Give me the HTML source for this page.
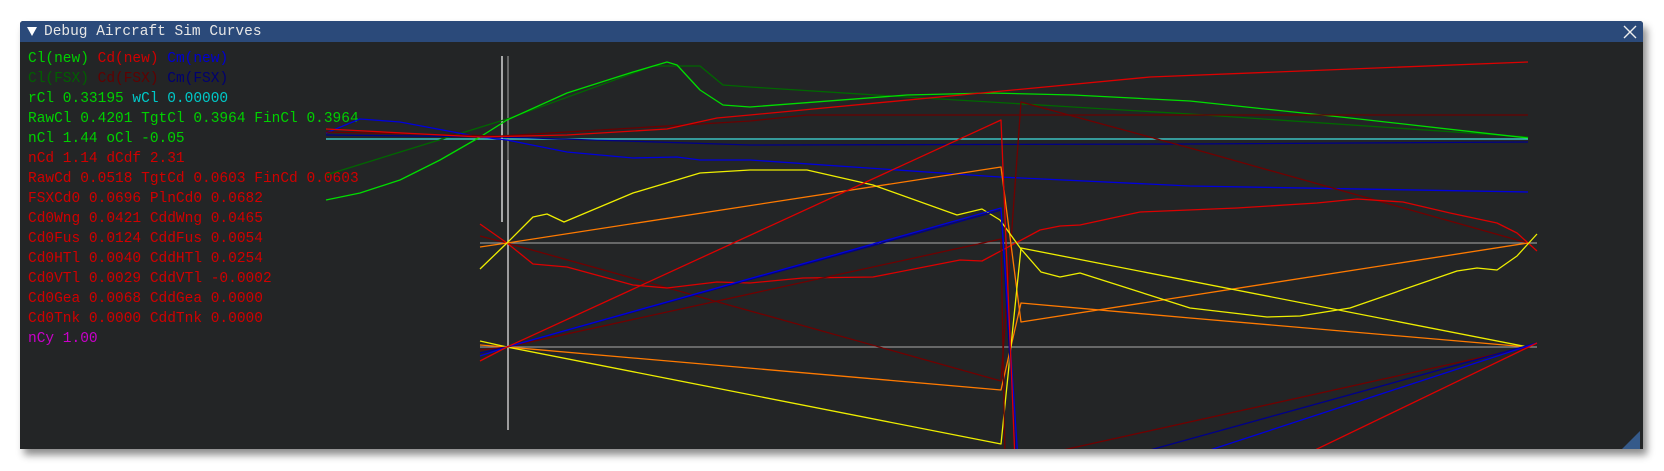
<!DOCTYPE html>
<html><head><meta charset="utf-8"><style>
html,body{margin:0;padding:0;background:#fff;width:1664px;height:471px;overflow:hidden}
.win{position:absolute;left:20px;top:21px;width:1623px;height:428px;background:#232526;box-shadow:4px 6px 8px rgba(0,0,0,0.45);border-radius:3px 3px 0 0;overflow:hidden}
.tb{position:absolute;left:0;top:0;width:100%;height:21px;background:#2b4a7a}
.tt{position:absolute;left:24px;top:1px;font:14.5px "Liberation Mono",monospace;color:#e6e6e6;line-height:20px}
.tri{position:absolute;left:7px;top:6px;width:0;height:0;border-left:5px solid transparent;border-right:5px solid transparent;border-top:9px solid #fff}
.txt{position:absolute;left:8px;top:28px;font:14.5px "Liberation Mono",monospace;line-height:20px;white-space:pre}
svg{position:absolute;left:0;top:0}
</style></head><body>
<div class="win">
<div class="tb"><div class="tri"></div><div class="tt">Debug Aircraft Sim Curves</div>
<svg width="1623" height="21"><path d="M1604 5 L1616 17 M1616 5 L1604 17" stroke="#eee" stroke-width="1.4"/></svg></div>
<div class="txt"><span style="color:#00d000">Cl(new)</span> <span style="color:#d00000">Cd(new)</span> <span style="color:#0000d0">Cm(new)</span>
<span style="color:#006000">Cl(FSX)</span> <span style="color:#600000">Cd(FSX)</span> <span style="color:#000070">Cm(FSX)</span>
<span style="color:#00d000">rCl 0.33195</span> <span style="color:#00c8c8">wCl 0.00000</span>
<span style="color:#00d000">RawCl 0.4201 TgtCl 0.3964 FinCl 0.3964
nCl 1.44 oCl -0.05</span>
<span style="color:#d00000">nCd 1.14 dCdf 2.31
RawCd 0.0518 TgtCd 0.0603 FinCd 0.0603
FSXCd0 0.0696 PlnCd0 0.0682
Cd0Wng 0.0421 CddWng 0.0465
Cd0Fus 0.0124 CddFus 0.0054
Cd0HTl 0.0040 CddHTl 0.0254
Cd0VTl 0.0029 CddVTl -0.0002
Cd0Gea 0.0068 CddGea 0.0000
Cd0Tnk 0.0000 CddTnk 0.0000</span>
<span style="color:#c800c8">nCy 1.00</span></div>
</div>
<svg width="1664" height="471" style="clip-path:inset(42px 21px 22px 20px)">
<g fill="none" stroke-width="1.3" stroke-linejoin="round">
<line x1="326" y1="139" x2="1528" y2="139" stroke="#40e0e0"/>
<line x1="480" y1="243" x2="1537" y2="243" stroke="#909090"/>
<line x1="480" y1="347" x2="1537" y2="347" stroke="#909090"/>
<line x1="502" y1="56" x2="502" y2="222" stroke="#f0f0f0"/>
<line x1="508" y1="56" x2="508" y2="160" stroke="#888"/>
<line x1="508" y1="160" x2="508" y2="430" stroke="#ddd"/>
<path stroke="#006800" d="M326 175 L507 119 L653 66 L700 66 L723 85 L750 87 L907 97 L1073 107 L1190 114 L1528 137"/>
<path stroke="#00dd00" d="M326 200 L360 193 L400 180 L440 160 L480 137 L507 120 L567 93 L633 72 L667 62 L677 65 L700 90 L723 105 L750 107 L907 95 L990 93 L1073 95 L1190 101 L1350 118 L1528 138"/>
<path stroke="#000088" d="M326 135 L500 137 L750 145 L1190 144 L1528 142"/>
<path stroke="#0000dd" d="M326 133 L360 119 L400 122 L480 137 L507 140 L567 152 L633 158 L677 157 L700 160 L750 160 L1000 177 L1190 186 L1528 192"/>
<path stroke="#6a0000" d="M326 132 L500 136 L750 121 L807 115 L1528 115"/>
<path stroke="#dd0000" d="M326 129 L480 137 L567 135 L667 129 L717 118 L750 115 L1150 77 L1528 62"/>
<path stroke="#700000" d="M480 236 L507 243 L1001 381 L1021 102 L1190 148 L1528 243"/>
<path stroke="#dd0000" d="M480 224 L507 243 L533 264 L567 267 L633 285 L667 288 L717 282 L750 283 L803 278 L873 277 L960 260 L982 261 L1040 230 L1060 226 L1080 225 L1140 212 L1237 208 L1317 203 L1357 199 L1403 202 L1450 213 L1497 223 L1517 233 L1537 251"/>
<path stroke="#ff7a00" d="M480 247 L507 243 L1001 167 L1021 322 L1528 243"/>
<path stroke="#ff7a00" d="M480 345 L507 347 L1001 390 L1021 303 L1190 318 L1528 347"/>
<path stroke="#eeee00" d="M480 269 L507 243 L533 217 L547 214 L564 222 L633 193 L700 173 L750 170 L807 170 L873 185 L957 215 L982 209 L1000 220 L1021 249 L1041 272 L1060 277 L1080 273 L1190 308 L1267 317 L1300 316 L1350 308 L1457 271 L1477 268 L1497 270 L1517 256 L1537 234"/>
<path stroke="#eeee00" d="M480 341 L507 347 L1001 444 L1021 248 L1528 347"/>
<path stroke="#700000" d="M480 350 L507 347 L1001 239 L1005 460"/>
<path stroke="#000088" d="M480 353 L507 347 L1001 210 L1016 460"/>
<path stroke="#0000dd" d="M480 356 L507 347 L1001 208 L1018 460"/>
<path stroke="#dd0000" d="M480 361 L507 347 L1001 120 L1015 460"/>
<path stroke="#700000" d="M1063 450 L1528 347"/>
<path stroke="#000088" d="M1150 450 L1537 343"/>
<path stroke="#0000dd" d="M1210 450 L1537 343"/>
<path stroke="#dd0000" d="M1315 450 L1537 343"/>
<path fill="#355a8a" stroke="none" d="M1640 431 L1640 449 L1622 449 Z"/>
</g></svg>
</body></html>
